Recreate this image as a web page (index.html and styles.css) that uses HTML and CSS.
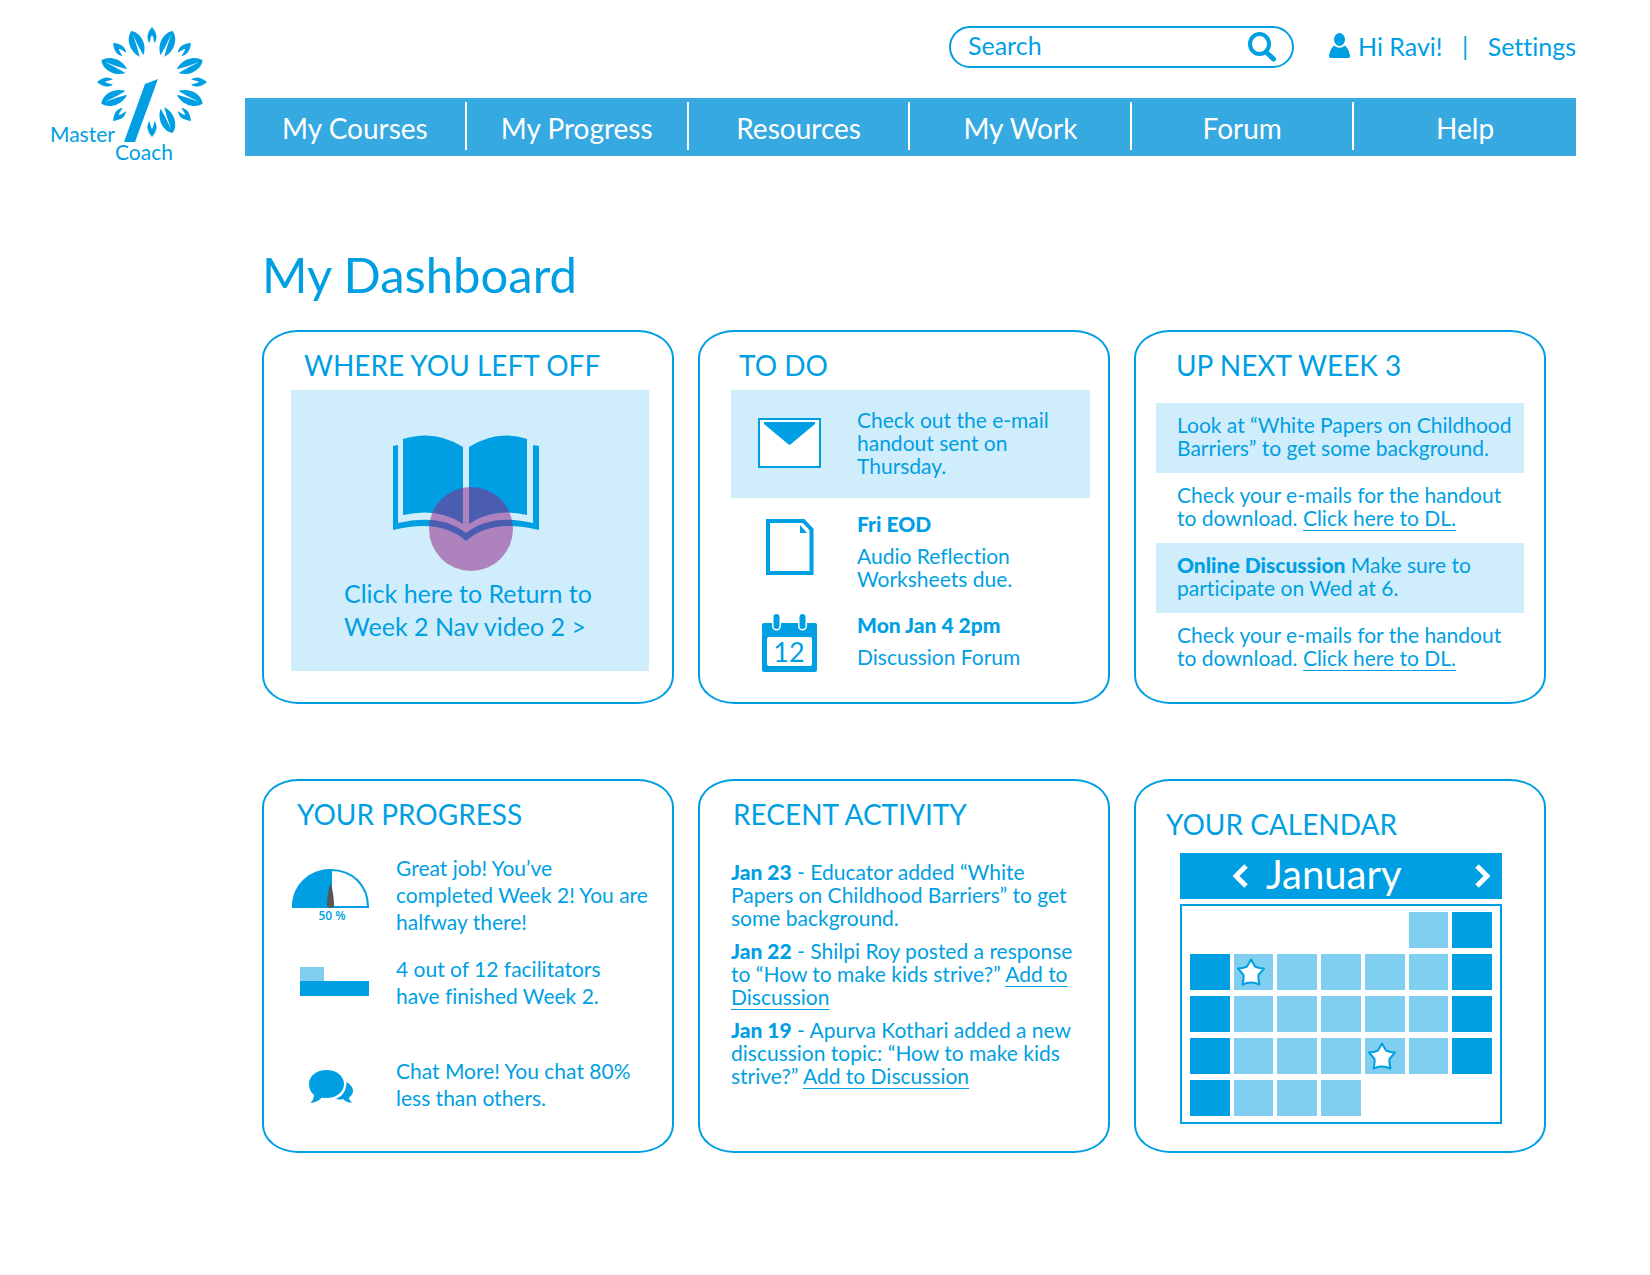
FILE: index.html
```html
<!DOCTYPE html>
<html lang="en">
<head>
<meta charset="utf-8">
<meta name="viewport" content="width=device-width, initial-scale=1">
<title>Master Coach – My Dashboard</title>
<link rel="stylesheet" href="styles.css">
</head>
<body>
<header class="site-header">
  <a class="logo" href="#" aria-label="Master Coach home">
    <svg width="160" height="138" viewBox="0 0 160 138">
      <defs>
        <path id="leaf-small" d="M0-55C-5-49-6-44-2.500-39L-1-45L0-47L1-45L2.500-39C6-44 5-49 0-55Z"/>
        <path id="leaf-large" d="M0-55C-5-52-7-46-7-41C-7-36-5-31-2-28L-0.8-38L0-51L0.8-38L2-28C5-31 7-36 7-41C7-46 5-52 0-55Z"/>
      </defs>
      <g transform="translate(102 56)">
        <use href="#leaf-small"/>
        <use href="#leaf-small" transform="rotate(45)"/>
        <use href="#leaf-small" transform="rotate(90)"/>
        <use href="#leaf-small" transform="rotate(135)"/>
        <use href="#leaf-small" transform="rotate(180)"/>
        <use href="#leaf-small" transform="rotate(225)"/>
        <use href="#leaf-small" transform="rotate(270)"/>
        <use href="#leaf-small" transform="rotate(315)"/>
        <use href="#leaf-large" transform="rotate(22)"/>
        <use href="#leaf-large" transform="rotate(67)"/>
        <use href="#leaf-large" transform="rotate(113)"/>
        <use href="#leaf-large" transform="rotate(158)"/>
        <use href="#leaf-large" transform="rotate(247)"/>
        <use href="#leaf-large" transform="rotate(293)"/>
        <use href="#leaf-large" transform="rotate(338)"/>
      </g>
      <path d="M95 58L108 53L85 116H74Z"/>
      <text x="0" y="116">Master</text>
      <text x="65" y="134">Coach</text>
    </svg>
  </a>
  <div class="header-main">
    <div class="toolbar">
      <form class="search" role="search">
        <input type="search" aria-label="Search" placeholder="Search">
        <button type="submit" aria-label="Submit search">
          <svg width="28" height="30" viewBox="0 0 28 30"><ellipse cx="11.500" cy="12" rx="9.500" ry="10" fill="none" stroke="currentColor" stroke-width="4"/><path d="M18 20L25.500 27" stroke="currentColor" stroke-width="5" stroke-linecap="round"/></svg>
        </button>
      </form>
      <div class="account">
        <a class="user" href="#">
          <svg width="21" height="26" viewBox="0 0 21 26"><ellipse cx="10.500" cy="6.500" rx="5.500" ry="6.500"/><path d="M5 12.500Q10.500 17 16 12.500Q20 16 21 23Q21 25 19.500 25H1.500Q0 25 0 23Q1 16 5 12.500Z"/></svg>
          Hi Ravi!
        </a>
        <span>|</span>
        <a href="#">Settings</a>
      </div>
    </div>
    <nav class="main-nav">
      <a href="#">My Courses</a>
      <a href="#">My Progress</a>
      <a href="#">Resources</a>
      <a href="#">My Work</a>
      <a href="#">Forum</a>
      <a href="#">Help</a>
    </nav>
  </div>
</header>

<main class="dashboard">
  <h1>My Dashboard</h1>
  <div class="cards">
    <section class="card card-resume">
      <h2>WHERE YOU LEFT OFF</h2>
      <a class="resume" href="#">
        <svg width="156" height="137" viewBox="0 0 156 137">
          <path d="M10 4Q42-6 70 12V89Q46 72 10 80ZM76 12Q104-6 134 4V80Q100 72 76 89Z"/>
          <path d="M0 11L5 10V88Q48 78 73 98Q98 78 140 88V10L146 11V95Q98 83 73 106Q48 83 0 95Z"/>
          <circle cx="78" cy="94" r="42" fill="#902182" fill-opacity=".52"/>
        </svg>
        <span>Click here to Return to<br>Week 2 Nav video 2 &gt;</span>
      </a>
    </section>

    <section class="card card-todo">
      <h2>TO DO</h2>
      <ul>
        <li class="shaded">
          <svg width="64" height="50" viewBox="0 0 64 50"><rect x="1" y="1" width="61" height="48" fill="#fff" stroke="currentColor" stroke-width="2"/><path d="M6 4H57V6L33 26Q31.500 27.500 30 26L6 6Z"/></svg>
          <p>Check out the e-mail<br>handout sent on<br>Thursday.</p>
        </li>
        <li>
          <svg width="48" height="64" viewBox="0 -7 48 64"><path d="M2 2H37.500L45.500 10.500V54H2Z" fill="none" stroke="currentColor" stroke-width="4"/><path d="M34 6V14H41Z"/></svg>
          <div><strong>Fri EOD</strong><p>Audio Reflection<br>Worksheets due.</p></div>
        </li>
        <li>
          <svg width="56" height="60" viewBox="0 0 56 60"><rect x="0" y="10" width="55" height="49" rx="2"/><rect x="5" y="24" width="45" height="29" rx="2" fill="#fff"/><path d="M14.500 5V13M40.500 5V13" stroke="#fff" stroke-width="9" stroke-linecap="round"/><path d="M14.500 4V13M40.500 4V13" stroke="currentColor" stroke-width="6" stroke-linecap="round"/><text class="day" x="27" y="49" text-anchor="middle">12</text></svg>
          <div><strong>Mon Jan 4 2pm</strong><p>Discussion Forum</p></div>
        </li>
      </ul>
    </section>

    <section class="card card-next">
      <h2>UP NEXT WEEK 3</h2>
      <ul>
        <li class="shaded">Look at “White Papers on Childhood<br>Barriers” to get some background.</li>
        <li>Check your e-mails for the handout<br>to download. <a href="#">Click here to DL.</a></li>
        <li class="shaded"><strong>Online Discussion</strong> Make sure to<br>participate on Wed at 6.</li>
        <li>Check your e-mails for the handout<br>to download. <a href="#">Click here to DL.</a></li>
      </ul>
    </section>

    <section class="card card-progress">
      <h2>YOUR PROGRESS</h2>
      <ul>
        <li>
          <svg width="78" height="56" viewBox="0 -2 78 56"><path d="M1 38C1 16 18 1 39 1S76 16 76 38Z" fill="#fff" stroke="currentColor" stroke-width="2"/><path d="M0 39C0 16 17 0 40 0V39Z"/><path d="M38.500 15C40.500 18 42 30 42 36Q42 39 38.500 39Q35 39 35 36C35 30 36.500 18 38.500 15Z" fill="#575756"/><text class="gauge-label" x="40" y="51" text-anchor="middle">50 %</text></svg>
          <p>Great job! You’ve<br>completed Week 2! You are<br>halfway there!</p>
        </li>
        <li>
          <svg width="78" height="30" viewBox="-8 0 78 30"><path d="M0 0H24V14H0Z" fill="#80cff1"/><path d="M0 14H69V29H0Z"/></svg>
          <p>4 out of 12 facilitators<br>have finished Week 2.</p>
        </li>
        <li class="chat">
          <svg width="44" height="40" viewBox="0 -6 44 40"><path d="M17.500 0C27.500 0 35 6 35 14S27.500 28 17.500 28C16 28 14 28 13 27.500C10 31 5 32.500 1.500 33C3.500 31 5 28 5 25C2 22.500 0 19 0 14C0 6 7.500 0 17.500 0Z"/><path d="M37.500 12C41 14 44 17 44 21C44 24 42 26 40 27.500C40 29.500 41.500 31 43 32.500C39 33 36 31 34 29C31 30 28.500 29.500 27 28.500C33 27 37.500 21 37.500 12Z"/></svg>
          <p>Chat More! You chat 80%<br>less than others.</p>
        </li>
      </ul>
    </section>

    <section class="card card-activity">
      <h2>RECENT ACTIVITY</h2>
      <div class="feed">
        <p><strong>Jan 23</strong> - Educator added “White<br>Papers on Childhood Barriers” to get<br>some background.</p>
        <p><strong>Jan 22</strong> - Shilpi Roy posted a response<br>to “How to make kids strive?” <a href="#">Add to<br>Discussion</a></p>
        <p><strong>Jan 19</strong> - Apurva Kothari added a new<br>discussion topic: “How to make kids<br>strive?” <a href="#">Add to Discussion</a></p>
      </div>
    </section>

    <section class="card card-calendar">
      <h2>YOUR CALENDAR</h2>
      <div class="month">
        <button type="button" aria-label="Previous month"><svg width="16" height="26" viewBox="0 0 16 26"><path d="M13 3L3 13L13 23" fill="none" stroke="currentColor" stroke-width="5"/></svg></button>
        <span>January</span>
        <button class="next" type="button" aria-label="Next month"><svg width="16" height="26" viewBox="0 0 16 26"><path d="M3 3L13 13L3 23" fill="none" stroke="currentColor" stroke-width="5"/></svg></button>
      </div>
      <svg class="symbols" width="0" height="0"><symbol id="star" viewBox="0 0 28 28"><path d="M14 1.500L18 8.500Q22 10.500 27 10.500L21.500 17Q21 21 22.500 26.500Q18 24.500 14 24.500T5.500 26.500Q7 21 6.500 17L1 10.500Q6 10.500 10 8.500Z" fill="#fff" stroke="#009fe3" stroke-width="2" stroke-linejoin="round"/></symbol></svg>
      <div class="month-grid">
        <table aria-label="January">
          <tr><td></td><td></td><td></td><td></td><td></td><td class="day-on"></td><td class="weekend"></td></tr>
          <tr><td class="weekend"></td><td class="day-on"><svg width="28" height="28"><use href="#star"/></svg></td><td class="day-on"></td><td class="day-on"></td><td class="day-on"></td><td class="day-on"></td><td class="weekend"></td></tr>
          <tr><td class="weekend"></td><td class="day-on"></td><td class="day-on"></td><td class="day-on"></td><td class="day-on"></td><td class="day-on"></td><td class="weekend"></td></tr>
          <tr><td class="weekend"></td><td class="day-on"></td><td class="day-on"></td><td class="day-on"></td><td class="day-on"><svg width="28" height="28"><use href="#star"/></svg></td><td class="day-on"></td><td class="weekend"></td></tr>
          <tr><td class="weekend"></td><td class="day-on"></td><td class="day-on"></td><td class="day-on"></td><td></td><td></td><td></td></tr>
        </table>
      </div>
    </section>
  </div>
</main>
</body>
</html>
```
FILE: styles.css
```css
:root {
  --blue: #009fe3;
  --nav-blue: #36a9e1;
  --light-blue: #80cff1;
  --pale-blue: #d0edfb;
}

* {
  box-sizing: border-box;
}

body {
  margin: 0;
  background: #fff;
  color: var(--blue);
  font: 21px/23px Lato, "Open Sans", sans-serif;
  font-variant-ligatures: none;
}

h1, h2, p, ul {
  margin: 0;
  padding: 0;
  font-weight: 400;
}

ul {
  list-style: none;
}

a {
  color: inherit;
}

strong {
  font-weight: 900;
}

svg {
  display: block;
  fill: currentColor;
}

button {
  padding: 0;
  border: 0;
  background: none;
  color: inherit;
  cursor: pointer;
}

/* Header */

.site-header {
  display: flex;
  padding: 26px 74px 0 50px;
}

.logo {
  flex: 0 0 195px;
  font-size: 21px;
}

.header-main {
  flex: 1;
}

.toolbar {
  display: flex;
  justify-content: flex-end;
  gap: 35px;
  height: 42px;
  margin-bottom: 30px;
}

.search {
  display: flex;
  align-items: center;
  width: 345px;
  padding: 0 16px 0 17px;
  border: 2px solid var(--blue);
  border-radius: 21px;
}

.search input {
  flex: 1;
  min-width: 0;
  padding: 0 0 4px;
  border: 0;
  outline: 0;
  background: none;
  color: inherit;
  font: inherit;
  font-size: 25px;
  line-height: 30px;
}

.search input::placeholder {
  color: inherit;
  opacity: 1;
}

.account {
  display: flex;
  align-items: center;
  justify-content: space-between;
  width: 247px;
  padding-bottom: 2px;
  font-size: 25px;
}

.account a {
  text-decoration: none;
}

.user {
  display: flex;
  align-items: center;
  gap: 8px;
}

.main-nav {
  display: grid;
  grid-template-columns: repeat(6, 1fr);
  padding: 4px 0 6px;
  background: var(--nav-blue);
}

.main-nav a {
  padding-top: 4px;
  border-right: 2px solid #fff;
  color: #fff;
  font-size: 28px;
  line-height: 44px;
  text-align: center;
  text-decoration: none;
}

.main-nav a:last-child {
  border-right: 0;
}

/* Dashboard */

.dashboard {
  padding: 81px 104px 123px 262px;
}

h1 {
  margin-bottom: 27px;
  font-size: 49px;
  line-height: 58px;
}

.cards {
  display: grid;
  grid-template-columns: repeat(3, 1fr);
  grid-auto-rows: minmax(374px, auto);
  gap: 75px 24px;
}

.card {
  padding: 15px 20px 16px;
  border: 2px solid var(--blue);
  border-radius: 36px / 28px;
}

h2 {
  font-size: 28px;
  line-height: 36px;
}

.shaded {
  background: var(--pale-blue);
}

/* Where you left off */

.card-resume {
  padding-right: 23px;
  padding-left: 27px;
}

.card-resume h2 {
  margin-bottom: 7px;
  padding-left: 13px;
}

.resume {
  display: block;
  padding: 45px 20px 28px 53px;
  background: var(--pale-blue);
  font-size: 25px;
  line-height: 33px;
  text-decoration: none;
}

.resume svg {
  margin: 0 49px 5px;
}

/* To do */

.card-todo {
  padding-right: 18px;
  padding-left: 31px;
}

.card-todo h2 {
  margin-bottom: 7px;
  padding-left: 8px;
}

.card-todo li {
  display: grid;
  grid-template-columns: 118px 1fr;
  align-items: start;
  justify-items: start;
  column-gap: 8px;
}

.card-todo li + li {
  margin-bottom: 23px;
}

.card-todo li:last-child {
  margin-bottom: 0;
}

.card-todo li svg {
  justify-self: center;
}

.card-todo .shaded {
  align-items: center;
  margin-bottom: 14px;
  padding: 18px 0 21px;
}

.card-todo strong {
  display: block;
  margin-bottom: 9px;
}

.day {
  font-size: 27px;
}

/* Up next */

.card-next h2 {
  margin-bottom: 20px;
  padding-left: 20px;
}

.card-next li {
  padding: 10px 0 14px 21px;
}

.card-next a,
.feed a {
  text-decoration-thickness: 1px;
  text-underline-offset: 4px;
  text-decoration-skip-ink: none;
}

/* Your progress */

.card-progress {
  padding-left: 27px;
}

.card-progress h2 {
  margin-bottom: 22px;
  padding-left: 6px;
}

.card-progress ul {
  display: flex;
  flex-direction: column;
  gap: 20px;
}

.card-progress li {
  display: grid;
  grid-template-columns: 80px 1fr;
  align-items: center;
  column-gap: 25px;
  line-height: 27px;
}

.card-progress li svg {
  justify-self: center;
}

.card-progress .chat {
  margin-top: 28px;
}

.gauge-label {
  font: 600 12px "Open Sans", sans-serif;
}

/* Recent activity */

.card-activity {
  padding-left: 31px;
}

.card-activity h2 {
  margin-bottom: 28px;
  padding-left: 2px;
}

.feed {
  display: grid;
  gap: 10px;
}

/* Your calendar */

.card-calendar {
  padding: 25px 42px 16px 44px;
}

.card-calendar h2 {
  margin: 0 0 11px -14px;
}

.month {
  display: flex;
  align-items: center;
  gap: 17px;
  height: 46px;
  margin-bottom: 5px;
  padding: 0 12px 0 53px;
  background: var(--blue);
  color: #fff;
  font-size: 40px;
  line-height: 42px;
}

.month span {
  padding-bottom: 4px;
}

.month .next {
  margin-left: auto;
}

.symbols {
  position: absolute;
}

.month-grid {
  padding: 0 4px;
  border: 2px solid var(--blue);
}

.month-grid table {
  width: 100%;
  table-layout: fixed;
  border-spacing: 4px 6px;
}

.month-grid td {
  height: 36px;
  padding: 0 3px;
  vertical-align: middle;
}

.day-on {
  background: var(--light-blue);
}

.weekend {
  background: var(--blue);
}
```
